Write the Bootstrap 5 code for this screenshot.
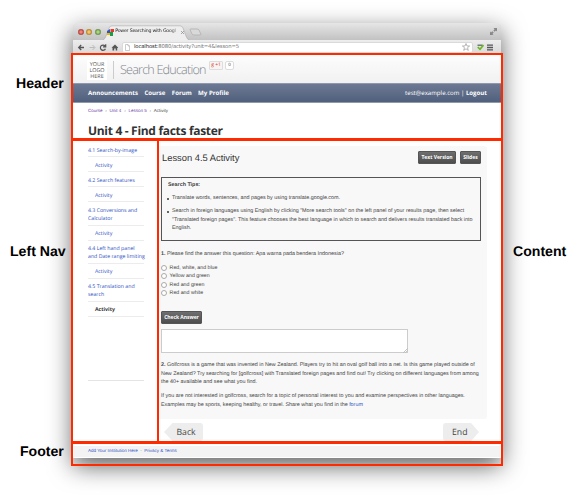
<!DOCTYPE html>
<html lang="en">
<head>
<meta charset="utf-8">
<title>Course page regions</title>
<link href="https://cdn.jsdelivr.net/npm/bootstrap@5.3.0/dist/css/bootstrap.min.css" rel="stylesheet">
<style>
html,body{width:576px;height:502px;overflow:hidden;background:#fff}
body{font-family:"Open Sans",sans-serif;font-size:5px;line-height:8.4px;color:#444;text-rendering:geometricPrecision;white-space:nowrap}
a{text-decoration:none;color:#2f50c4}
svg{display:block;flex:none}
.gutter-left{width:73px;z-index:2}
.gutter-right{width:75px;z-index:2}
.region-label{font:bold 14.1px/20px "Liberation Sans",Arial,sans-serif;color:#000}
.label-header{margin-top:73px;padding-left:16px}
.label-nav{margin-top:148px;padding-left:10px}
.label-footer{margin-top:180px;padding-left:20px}
.label-content{margin-top:241px;padding-left:12px}
.browser{width:428px;height:435px;margin-top:23px;background:#fff;border-radius:2px 2px 0 0;box-shadow:0 8px 24px rgba(0,0,0,.64)}
.tabstrip{height:17px;background:linear-gradient(#e6e6e6,#c2c2c2);border-radius:2px 2px 0 0;padding-left:5px}
.light{width:6px;height:6px;border-radius:50%;margin-right:2.4px;border:.5px solid #0003}
.red-light{background:radial-gradient(#f59a90,#d5463b)}
.amber-light{background:radial-gradient(#f8d384,#dc9a2c)}
.green-light{background:radial-gradient(#bfe29b,#74a844)}
.browser-tab{width:86px;height:15px;margin-top:2px}
.tab-title{font-family:"DejaVu Sans",sans-serif;font-size:4.7px;letter-spacing:-.2px;color:#222;width:65px;margin-left:1px;-webkit-mask-image:linear-gradient(90deg,#000 85%,#0003)}
.tab-shape{position:absolute;inset:0;z-index:0}
.toolbar{height:14px;background:linear-gradient(#ededed,#d9d9d9);padding-left:4px;padding-right:4px}
.address{width:351px;height:11px;background:#fff;border:1px solid #dadada;border-radius:2px;font-family:"DejaVu Sans",sans-serif;font-size:5.3px;letter-spacing:-.13px;color:#777;padding-left:2px;padding-right:2px}
.address b{font-weight:400;color:#222}
.brand-row{height:29px;background:linear-gradient(#fdfdfd,#f1f1f1);padding:2px 0 0 14px}
.logo-box{width:20px;height:20px;background:#fff;font-size:5.4px;line-height:6.3px;color:#555;padding-top:1px}
.brand-name{font-weight:300;font-size:12.6px;letter-spacing:-.8px;line-height:18px;color:#7f858b;border-left:1px solid #ccc;margin-left:6px;padding-left:6px;width:96px}
.plus-one{width:14px;height:9px;border:1px solid #ddd;background:#f8f4f3;color:#d43c2b;font-size:5px;line-height:7px;border-radius:1px}
.bubble{width:9px;height:9px;border:1px solid #ddd;background:#fff;font-size:4.5px;line-height:7px;border-radius:2px;margin-left:2px}
.main-menu{height:20px;background:linear-gradient(#6d7994,#50607c);border-top:1px solid #8e99ae;border-bottom:1px solid #8e99ae;padding:0 14px 0 15px;color:#fff;font-size:6.1px}
.main-menu a{color:#fff;font-weight:700;margin-right:6.4px}
.main-menu .logout{margin-right:0}
.crumbs{height:15px;padding-left:15px;font:4.5px/8px "Liberation Sans",Arial,sans-serif;padding-top:3.5px}
.crumbs a{color:#6a3aa8}
.crumbs i{font-style:normal;margin:0 2.8px;color:#888}
.unit-title{height:23px;font-size:12px;line-height:26px;font-weight:700;color:#333;padding-left:15px;margin:0;letter-spacing:-.31px}
.side{width:86px;padding:1.3px 15px 0 15px}
.side a{display:block;font-size:5.25px;letter-spacing:-.02px;line-height:8.2px;padding:3.3px 0 2.5px;border-bottom:1px solid #ececec}
.side a.sub-item{padding-left:7px}
.side a.current{color:#333;font-weight:700}
.side-end{height:64px;border-bottom:1px solid #e4e4e4}
.lesson{width:328px;height:273px;margin-top:5px;background:#f8f8f8;border-radius:0 3px 3px 0;padding:0 6px 0 2px;font:5.38px/8.4px "Liberation Sans",Arial,sans-serif}
.lesson h2{font-size:9.35px;line-height:12px;margin:1px 0 0;color:#333;padding-left:1px}
.lesson-head{height:31px;padding-top:5px}
.dark-btn{background:linear-gradient(#6f6f6f,#4d4d4d);border:1px solid #555;color:#fff;font:bold 5px/11px "Open Sans",sans-serif;height:13px;padding:0;border-radius:1px;text-align:center}
.text-btn{width:38px}
.slides-btn{width:21px}
.check-btn{width:41px;margin-top:14px;letter-spacing:-.05px}
.tips{height:64px;border:1px solid #555;padding:3px 6px}
.tips ul{list-style:none;padding-left:4px;margin:5px 0 0}
.tips li{margin-bottom:4.4px;position:relative}
.tips li::before{content:"";position:absolute;left:-5px;top:3.5px;width:2px;height:2px;border-radius:50%;background:#333}
.question{margin:9px 0 5.5px}
.choice{height:8.4px;line-height:8.4px;font-size:5.25px}
.choice input{width:6px;height:6px;margin:0 2.6px 0 0;appearance:none;border:1px solid #aaa;border-radius:50%;background:#fff}
.answer-wrap{width:247px}
.answer{width:247px;height:24px;border:1px solid #ccc;background:#fff;margin-top:5px;display:block;border-radius:0;padding:0;resize:none}
.second-question{margin:8px 0 5.6px}
.arrow-btn{height:18px;font-size:8.7px;line-height:18px;color:#444;background:#ededed;border-radius:3px}
.back-btn{width:39px;padding-left:12.5px;margin-left:5px;clip-path:polygon(0 50%,22% 0,100% 0,100% 100%,22% 100%)}
.end-btn{width:36px;padding-left:9px;margin-right:8px;clip-path:polygon(0 0,78% 0,100% 50%,78% 100%,0 100%)}
.pager{height:22px;padding-top:4px}
.site-foot{height:11px;background:#f3f3f3;margin:5px 1px 0 1px;padding-left:14px;font:4.5px/10px "Liberation Sans",Arial,sans-serif}
.frame{position:absolute;border:2px solid #ff2a00;z-index:5}
.frame-header{left:71px;top:53px;width:432px;height:88px;border-bottom-width:3px}
.frame-nav{left:71px;top:138px;width:88px;height:306px;border-top-width:3px;border-bottom-width:3px}
.frame-content{left:157px;top:138px;width:346px;height:306px;border-top-width:3px;border-bottom-width:3px}
.frame-footer{left:71px;top:441px;width:432px;height:25px;border-top-width:3px}
</style>
</head>
<body>
<div class="d-flex position-relative">
  <div class="gutter-left d-flex flex-column">
    <div class="region-label label-header">Header</div>
    <div class="region-label label-nav">Left Nav</div>
    <div class="region-label label-footer">Footer</div>
  </div>

  <div class="browser">
    <div class="tabstrip d-flex align-items-center">
      <span class="light red-light"></span><span class="light amber-light"></span><span class="light green-light"></span>
      <div class="browser-tab position-relative d-flex align-items-center">
        <svg class="tab-shape" width="86" height="15" viewBox="0 0 86 15"><path d="M0 15Q2 14 3 11L6 3Q7 .8 9 .8H77Q79 .8 80 3L83 11Q84 14 86 15" fill="#eee" stroke="#aaa" stroke-width=".6"/></svg>
        <svg class="position-relative ms-1" width="7" height="7" viewBox="0 0 7 7"><path fill="#2a56c6" d="M0 2l3-2v4H0z"/><path fill="#e33b2e" d="M3.5 0H7v3H3.5z"/><path fill="#1d9d45" d="M3 3h3v4H3z"/><path fill="#f4b400" d="M0 4h3v2H0z"/></svg>
        <span class="tab-title position-relative">Power Searching with Googl</span>
        <svg class="position-relative" width="5" height="5" viewBox="0 0 5 5"><path d="M1 1l3 3M4 1L1 4" stroke="#888" stroke-width=".7"/></svg>
      </div>
      <svg width="13" height="8" viewBox="0 0 13 8"><path d="M1 1.500Q1 1 2 1H8Q9.500 1 10 2L12 6.500Q12 7 11 7H5Q3.500 7 3 6Z" fill="#d9d9d9" stroke="#aaa" stroke-width=".7"/></svg>
      <svg class="ms-auto me-1" width="7" height="7" viewBox="0 0 7 7"><path d="M3.500 0H7V3.500L5.900 2.500 4.700 3.700 3.400 2.400 4.600 1.200ZM0 3.500L1.100 4.600 2.400 3.300 3.700 4.600 2.400 5.900 3.500 7H0Z" fill="#888"/></svg>
    </div>
    <div class="toolbar d-flex align-items-center">
      <svg width="41" height="9" viewBox="0 0 41 9" fill="none"><path d="M7 4.500H2M4.200 2L1.700 4.500 4.200 7" stroke="#555" stroke-width="1.300"/><path d="M12.500 4.500H17.500M15.500 2L18 4.500 15.500 7" stroke="#bbb" stroke-width="1"/><path d="M28 3A2.600 2.600 0 1 0 28.400 5.700M28.700 1.200V3.800H26" stroke="#555" stroke-width="1.200"/><path d="M34.500 4.800L38 1.500 41 4.600V5H40.200V7.500H38.700V5.500H37.200V7.500H35.500V4.800Z" fill="#555"/></svg>
      <div class="address d-flex align-items-center ms-1">
        <svg width="5" height="7" viewBox="0 0 5 7"><path d="M.5.5H3L4.500 2V6.500H.5ZM3 .5V2H4.500" fill="#fff" stroke="#aaa" stroke-width=".6"/></svg>
        <span class="ms-1"><b>localhost</b>:8080/activity?unit=4&amp;lesson=5</span>
        <svg class="ms-auto" width="8" height="8" viewBox="0 0 8 8"><path d="M4 .5L5 3H7.600L5.500 4.700 6.300 7.400 4 5.800 1.700 7.400 2.500 4.700.4 3H3Z" fill="#fff" stroke="#999" stroke-width=".7"/></svg>
      </div>
      <svg class="ms-1" width="7" height="8" viewBox="0 0 7 8"><path d="M.5 1.500H5.500V3H.5Z" fill="#777"/><path d="M.8 4L3 6.300 6.500 2" stroke="#68b91f" stroke-width="1.700" fill="none"/></svg>
      <svg class="ms-auto me-1" width="6" height="7" viewBox="0 0 6 7"><path d="M0 1.200H6M0 3.500H6M0 5.800H6" stroke="#555" stroke-width="1.300"/></svg>
    </div>

    <header>
      <div class="brand-row d-flex align-items-center">
        <div class="logo-box text-center">YOUR<br>LOGO<br>HERE</div>
        <div class="brand-name">Search Education</div>
        <div class="plus-one text-center mb-2">g +1</div>
        <div class="bubble text-center mb-2">0</div>
      </div>
      <nav class="main-menu d-flex align-items-center">
        <a href="#">Announcements</a><a href="#">Course</a><a href="#">Forum</a><a href="#">My Profile</a>
        <span class="ms-auto">test@example.com | <a class="logout" href="#">Logout</a></span>
      </nav>
      <div class="crumbs"><a href="#">Course</a><i>›</i><a href="#">Unit 4</a><i>›</i><a href="#">Lesson 5</a><i>›</i>Activity</div>
      <h1 class="unit-title">Unit 4 - Find facts faster</h1>
    </header>

    <div class="d-flex">
      <aside class="side">
        <a href="#">4.1 Search-by-image</a>
        <a class="sub-item" href="#">Activity</a>
        <a href="#">4.2 Search features</a>
        <a class="sub-item" href="#">Activity</a>
        <a href="#">4.3 Conversions and<br>Calculator</a>
        <a class="sub-item" href="#">Activity</a>
        <a href="#">4.4 Left hand panel<br>and Date range limiting</a>
        <a class="sub-item" href="#">Activity</a>
        <a href="#">4.5 Translation and<br>search</a>
        <a class="sub-item current" href="#">Activity</a>
        <div class="side-end"></div>
      </aside>
      <main>
        <section class="lesson">
          <div class="lesson-head d-flex align-items-start">
            <h2>Lesson 4.5 Activity</h2>
            <button class="dark-btn text-btn ms-auto me-1">Text Version</button>
            <button class="dark-btn slides-btn">Slides</button>
          </div>
          <div class="tips">
            <strong>Search Tips:</strong>
            <ul>
              <li>Translate words, sentences, and pages by using translate.google.com.</li>
              <li>Search in foreign languages using English by clicking "More search tools" on the left panel of your results page, then select<br>"Translated foreign pages". This feature chooses the best language in which to search and delivers results translated back into<br>English.</li>
            </ul>
          </div>
          <p class="question"><b>1.</b> Please find the answer this question: Apa warna pada bendera Indonesia?</p>
          <label class="choice d-flex align-items-center"><input type="radio" name="q1">Red, white, and blue</label>
          <label class="choice d-flex align-items-center"><input type="radio" name="q1">Yellow and green</label>
          <label class="choice d-flex align-items-center"><input type="radio" name="q1">Red and green</label>
          <label class="choice d-flex align-items-center"><input type="radio" name="q1">Red and white</label>
          <button class="dark-btn check-btn d-block">Check Answer</button>
          <div class="answer-wrap position-relative">
            <textarea class="answer"></textarea>
            <svg class="position-absolute bottom-0 end-0" width="5" height="5" viewBox="0 0 5 5"><path d="M4.500.5L.5 4.500M4.500 2.500L2.500 4.500" stroke="#aaa" stroke-width=".7"/></svg>
          </div>
          <p class="second-question"><b>2.</b> Golfcross is a game that was invented in New Zealand. Players try to hit an oval golf ball into a net. Is this game played outside of<br>New Zealand? Try searching for [golfcross] with Translated foreign pages and find out! Try clicking on different languages from among<br>the 40+ available and see what you find.</p>
          <p class="m-0">If you are not interested in golfcross, search for a topic of personal interest to you and examine perspectives in other languages.<br>Examples may be sports, keeping healthy, or travel. Share what you find in the <a href="#">forum</a></p>
        </section>
        <div class="pager d-flex justify-content-between">
          <div class="arrow-btn back-btn">Back</div>
          <div class="arrow-btn end-btn">End</div>
        </div>
      </main>
    </div>
    <footer class="site-foot"><a href="#">Add Your Institution Here</a> &nbsp;·&nbsp; <a href="#">Privacy &amp; Terms</a></footer>
  </div>

  <div class="gutter-right"><div class="region-label label-content">Content</div></div>

  <div class="frame frame-header"></div>
  <div class="frame frame-nav"></div>
  <div class="frame frame-content"></div>
  <div class="frame frame-footer"></div>
</div>
<script src="https://cdn.jsdelivr.net/npm/bootstrap@5.3.0/dist/js/bootstrap.bundle.min.js"></script>
</body>
</html>
